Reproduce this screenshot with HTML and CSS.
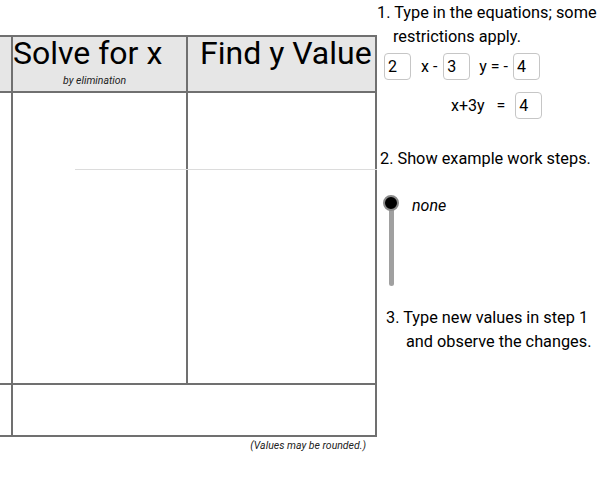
FILE: index.html
```html
<!DOCTYPE html>
<html lang="en">
<head>
    <meta charset="UTF-8">
    <meta name="viewport" content="width=device-width, initial-scale=1.0">
    <title>Solve by Elimination</title>
    <link rel="stylesheet" href="styles.css">
</head>
<body>
    <main class="page">
        <section class="left">
            <div class="sheet">
                <div class="row head">
                    <div class="cell edge"></div>
                    <div class="cell col-x">
                        <h1>Solve for x</h1>
                        <div class="sub">by elimination</div>
                    </div>
                    <div class="cell col-y">
                        <h1>Find y Value</h1>
                    </div>
                </div>
                <div class="row main">
                    <div class="guide"></div>
                    <div class="cell edge"></div>
                    <div class="cell col-x"></div>
                    <div class="cell col-y"></div>
                </div>
                <div class="row foot">
                    <div class="cell edge"></div>
                    <div class="cell col-wide"></div>
                </div>
            </div>
            <p class="note">(Values may be rounded.)</p>
        </section>

        <section class="panel">
            <p class="step step-one">1. Type in the equations; some<br>restrictions apply.</p>

            <!-- equation inputs -->
            <div class="eq eq-top">
                <input class="num" type="text" value="2">
                <span class="op op-x">x -</span>
                <input class="num" type="text" value="3">
                <span class="op op-y">y = -</span>
                <input class="num" type="text" value="4">
            </div>
            <div class="eq eq-bottom">
                <span class="op">x+3y</span>
                <span class="op op-eq">=</span>
                <input class="num" type="text" value="4">
            </div>

            <p class="step step-two">2. Show example work steps.</p>

            <!-- vertical slider -->
            <div class="slider">
                <div class="slider-bar">
                    <span class="knob"></span>
                    <span class="track"></span>
                </div>
                <span class="slider-label">none</span>
            </div>

            <p class="step step-three">3. Type new values in step 1<br>and observe the changes.</p>
        </section>
    </main>
</body>
</html>
```

FILE: styles.css
```css
body {
    font-family: Roboto, "Liberation Sans", sans-serif;
    margin: 0;
    padding: 0;
    background-color: white;
    color: black;
}

.page {
    display: flex;
    width: 600px;
    height: 480px;
}

.left {
    width: 377px;
    flex: none;
}

.sheet {
    margin-top: 35px;
}

.row {
    display: grid;
    grid-template-columns: 11px 175px 191px;
    box-sizing: border-box;
}

.head {
    height: 58px;
    background-color: #e6e6e6;
    border-top: 2px solid #707070;
    border-bottom: 2px solid #707070;
}

.main {
    height: 290px;
    position: relative;
}

.foot {
    height: 54px;
    grid-template-columns: 11px 366px;
    border-top: 2px solid #707070;
    border-bottom: 2px solid #707070;
}

.col-x {
    border-left: 2px solid #707070;
}

.col-y,
.col-wide {
    border-left: 2px solid #707070;
    border-right: 2px solid #707070;
}

.head h1 {
    margin: 0;
    font-size: 32px;
    font-weight: normal;
    line-height: 32px;
    white-space: nowrap;
}

.head .col-y h1 {
    padding-left: 12px;
}

.sub {
    margin-top: 5px;
    padding-left: 50px;
    font-size: 10.5px;
    font-style: italic;
    line-height: 14px;
    color: #222;
}

.guide {
    position: absolute;
    top: 76px;
    left: 75px;
    right: 0;
    height: 1px;
    background-color: #dcdcdc;
}

.note {
    margin: 2px 0 0;
    padding-right: 11px;
    text-align: right;
    font-size: 10.5px;
    font-style: italic;
    line-height: 14px;
    color: #222;
}

.panel {
    flex: 1;
    padding-top: 1px;
    font-size: 16px;
}

.step {
    margin: 0;
    font-size: 16.3px;
    line-height: 24px;
    white-space: nowrap;
}

.step-one {
    padding-left: 16px;
    text-indent: -16px;
}

.eq {
    display: flex;
    align-items: center;
}

.eq-top {
    margin-top: 4px;
    padding-left: 7px;
}

.eq-bottom {
    margin-top: 12px;
    padding-left: 74px;
}

.num {
    width: 27px;
    height: 27px;
    box-sizing: border-box;
    padding: 0 0 0 3px;
    border: 1px solid #c6c6c6;
    border-radius: 4px;
    font-family: inherit;
    font-size: 16px;
    color: black;
    background: white;
}

.op {
    white-space: nowrap;
}

.op-x {
    margin: 0 6px 0 10px;
}

.op-y {
    margin: 0 5px 0 9px;
}

.op-eq {
    margin: 0 10px 0 12px;
}

.step-two {
    margin-top: 28px;
    padding-left: 3px;
}

.slider {
    display: flex;
    margin-top: 24px;
    padding-left: 6px;
}

.slider-bar {
    display: flex;
    flex-direction: column;
    align-items: center;
    width: 16px;
}

.knob {
    position: relative;
    z-index: 1;
    width: 16px;
    height: 16px;
    box-sizing: border-box;
    border-radius: 50%;
    border: 2px solid #8a8a8a;
    background-color: black;
}

.track {
    width: 5px;
    height: 83px;
    margin-top: -8px;
    border-radius: 3px;
    background-color: #a0a0a0;
}

.slider-label {
    margin-left: 13px;
    margin-top: 1px;
    line-height: 20px;
    font-style: italic;
}

.step-three {
    margin-top: 20px;
    padding-left: 29px;
    text-indent: -20px;
}
```
